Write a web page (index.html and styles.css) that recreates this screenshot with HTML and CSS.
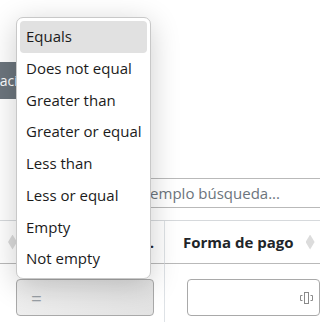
FILE: index.html
```html
<!DOCTYPE html>
<html lang="es">
<head>
<meta charset="utf-8">
<title>Filtro</title>
<link rel="stylesheet" href="styles.css">
</head>
<body>
<div class="page">
  <div class="toolbar">
    <button class="btn-secondary">Exportación</button>
  </div>
  <div class="search">
    <input class="search-input" type="text" placeholder="Ejemplo búsqueda...">
  </div>
  <div class="grid">
    <div class="th th-first">
      <span class="sort sort-left"></span>
      <span class="th-text th-text-first">Descripción del concepto</span>
    </div>
    <div class="th th-second">
      <span class="th-text">Forma de pago</span>
      <span class="sort"></span>
    </div>
    <div class="td td-first">
      <div class="op-select">=</div>
    </div>
    <div class="td td-second">
      <div class="filter-input">
        <svg class="resize-icon" width="13" height="12" viewBox="0 0 13 12">
          <path d="M2.5 3.5H0.5V8.5H2.5" fill="none" stroke="#8a8a8a" stroke-width="1"/>
          <rect x="4.5" y="0.5" width="4" height="11" fill="none" stroke="#8a8a8a" stroke-width="1"/>
          <path d="M10.5 3.5H12.5V8.5H10.5" fill="none" stroke="#8a8a8a" stroke-width="1"/>
        </svg>
      </div>
    </div>
  </div>

  <ul class="menu">
    <li class="item active">Equals</li>
    <li class="item">Does not equal</li>
    <li class="item">Greater than</li>
    <li class="item">Greater or equal</li>
    <li class="item">Less than</li>
    <li class="item">Less or equal</li>
    <li class="item">Empty</li>
    <li class="item">Not empty</li>
  </ul>
</div>
</body>
</html>
```

FILE: styles.css
```css
html, body {
  margin: 0;
  padding: 0;
  background: #ffffff;
}

.page {
  position: relative;
  width: 320px;
  height: 322px;
  overflow: hidden;
  font-family: "Open Sans", "Noto Sans", sans-serif;
  color: #212529;
}

.toolbar {
  display: flex;
  margin-top: 62px;
  margin-left: -57px;
}

.btn-secondary {
  height: 37px;
  padding: 0 14px;
  border: none;
  border-radius: 4px;
  background: #6c757d;
  color: #ffffff;
  font-family: "Open Sans", "Noto Sans", sans-serif;
  font-size: 14px;
}

.search {
  margin-top: 79px;
  margin-left: 126px;
  width: 260px;
}

.search-input {
  box-sizing: border-box;
  width: 100%;
  height: 30px;
  padding: 0 12px;
  border: none;
  border-top: 1px solid #b9b9b9;
  border-bottom: 1px solid #b9b9b9;
  font-family: "Open Sans", "Noto Sans", sans-serif;
  font-size: 15px;
  color: #212529;
  outline: none;
}

.search-input::placeholder {
  color: #6c757d;
}

.grid {
  margin-top: 12px;
  display: grid;
  grid-template-columns: 164px 170px;
  border-top: 1px solid #d6d9dc;
}

.th {
  height: 42px;
  display: flex;
  align-items: center;
  border-bottom: 1px solid #b9b9b9;
  font-weight: 700;
  font-size: 15px;
}

.th-first {
  padding-left: 8px;
  gap: 10px;
  overflow: hidden;
}

.th-second {
  border-left: 1px solid #dee2e6;
  padding-left: 18px;
  gap: 12px;
}

.th-text {
  white-space: nowrap;
}

.th-text-first {
  overflow: hidden;
  text-overflow: ellipsis;
  width: 130px;
}

.sort {
  flex: none;
  width: 9px;
  height: 15px;
  background: #dcdcdc;
  clip-path: polygon(50% 0, 100% 50%, 50% 100%, 0 50%);
}

.td {
  height: 58px;
  padding-top: 15px;
  box-sizing: border-box;
}

.td-first {
  padding-left: 16px;
  padding-right: 10px;
}

.td-second {
  border-left: 1px solid #dee2e6;
  padding-left: 22px;
}

.op-select {
  box-sizing: border-box;
  height: 37px;
  width: 138px;
  border: 1px solid #a9a9a9;
  border-radius: 4px;
  background: linear-gradient(to right, #eeeeee, #e3e3e3);
  color: #9aa0a6;
  font-size: 19px;
  display: flex;
  align-items: center;
  padding-left: 14px;
}

.filter-input {
  box-sizing: border-box;
  height: 37px;
  width: 133px;
  border: 1px solid #a9a9a9;
  border-radius: 4px;
  background: #ffffff;
  display: flex;
  align-items: center;
  justify-content: flex-end;
  padding-right: 6px;
}

.resize-icon {
  display: block;
}

.menu {
  position: absolute;
  left: 16px;
  top: 17px;
  width: 135px;
  margin: 0;
  padding: 3px;
  box-sizing: border-box;
  list-style: none;
  background: #ffffff;
  border: 1px solid #c8c8c8;
  border-radius: 7px;
  box-shadow: 0 6px 30px rgba(0, 0, 0, 0.2);
}

.item {
  padding: 4px 6px;
  line-height: 23.75px;
  font-size: 15px;
  border-radius: 4px;
  white-space: nowrap;
  color: #1b1b1b;
}

.item.active {
  background: #e1e1e1;
}
```
